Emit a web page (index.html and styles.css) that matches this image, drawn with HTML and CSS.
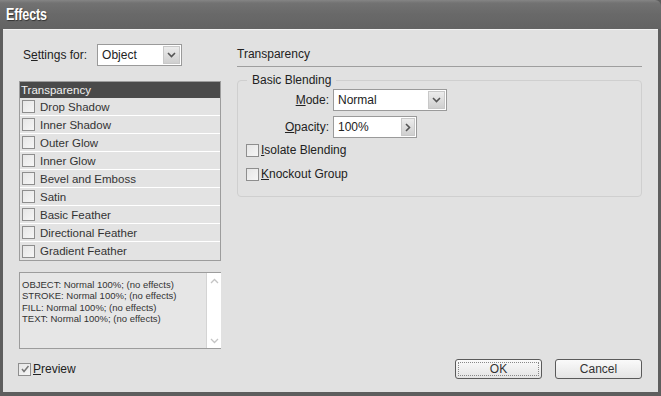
FILE: index.html
```html
<!DOCTYPE html>
<html lang="en">
<head>
    <meta charset="UTF-8">
    <title>Effects</title>
    <link rel="stylesheet" href="styles.css">
</head>
<body>
    <div class="window">
        <div class="titlebar">
            <span class="title">Effects</span>
        </div>

        <div class="content">
            <!-- left column: settings, effect list, summary -->
            <div class="left-col">
                <div class="settings-row">
                    <span class="label">S<u>e</u>ttings for:</span>
                    <div class="select settings-select">
                        <span class="select-value">Object</span>
                        <span class="drop-btn">
                            <svg width="9" height="6" viewBox="0 0 9 6"><path d="M1 1 L4.5 4.5 L8 1" fill="none" stroke="#555" stroke-width="1.6"/></svg>
                        </span>
                    </div>
                </div>

                <div class="effect-list">
                    <div class="effect-row selected">Transparency</div>
                    <div class="effect-row"><span class="check"></span>Drop Shadow</div>
                    <div class="effect-row"><span class="check"></span>Inner Shadow</div>
                    <div class="effect-row"><span class="check"></span>Outer Glow</div>
                    <div class="effect-row"><span class="check"></span>Inner Glow</div>
                    <div class="effect-row"><span class="check"></span>Bevel and Emboss</div>
                    <div class="effect-row"><span class="check"></span>Satin</div>
                    <div class="effect-row"><span class="check"></span>Basic Feather</div>
                    <div class="effect-row"><span class="check"></span>Directional Feather</div>
                    <div class="effect-row"><span class="check"></span>Gradient Feather</div>
                </div>

                <div class="summary">
                    <div class="summary-text">
                        OBJECT: Normal 100%; (no effects)<br>
                        STROKE: Normal 100%; (no effects)<br>
                        FILL: Normal 100%; (no effects)<br>
                        TEXT: Normal 100%; (no effects)
                    </div>
                    <div class="scrollbar">
                        <svg width="9" height="6" viewBox="0 0 9 6"><path d="M1 5 L4.5 1.5 L8 5" fill="none" stroke="#c4c4c4" stroke-width="1.3"/></svg>
                        <svg width="9" height="6" viewBox="0 0 9 6"><path d="M1 1 L4.5 4.5 L8 1" fill="none" stroke="#c4c4c4" stroke-width="1.3"/></svg>
                    </div>
                </div>

                <div class="preview-row">
                    <span class="check checked">
                        <svg width="10" height="10" viewBox="0 0 10 10"><path d="M2 5 L4 7.5 L8.5 2" fill="none" stroke="#777" stroke-width="1.5"/></svg>
                    </span>
                    <span><u>P</u>review</span>
                </div>
            </div>

            <!-- right column: transparency options and buttons -->
            <div class="right-col">
                <div class="section-title">Transparency</div>

                <div class="group">
                    <span class="legend">Basic Blending</span>

                    <div class="field-row">
                        <span class="field-label"><u>M</u>ode:</span>
                        <div class="select mode-select">
                            <span class="select-value">Normal</span>
                            <span class="drop-btn">
                                <svg width="9" height="6" viewBox="0 0 9 6"><path d="M1 1 L4.5 4.5 L8 1" fill="none" stroke="#555" stroke-width="1.6"/></svg>
                            </span>
                        </div>
                    </div>

                    <div class="field-row">
                        <span class="field-label"><u>O</u>pacity:</span>
                        <div class="select opacity-input">
                            <span class="select-value">100%</span>
                            <span class="drop-btn">
                                <svg width="6" height="9" viewBox="0 0 6 9"><path d="M1 1 L4.5 4.5 L1 8" fill="none" stroke="#555" stroke-width="1.6"/></svg>
                            </span>
                        </div>
                    </div>

                    <div class="check-row"><span class="check"></span><span><u>I</u>solate Blending</span></div>
                    <div class="check-row"><span class="check"></span><span><u>K</u>nockout Group</span></div>
                </div>

                <div class="buttons">
                    <button class="btn default">OK</button>
                    <button class="btn">Cancel</button>
                </div>
            </div>
        </div>
    </div>
</body>
</html>
```

FILE: styles.css
```css
* {
    margin: 0;
    padding: 0;
    box-sizing: border-box;
}

body {
    background-color: #5c5c5c;
    font-family: 'Liberation Sans', Arial, sans-serif;
    font-size: 11px;
    color: #222;
}

u {
    text-decoration: underline;
    text-underline-offset: 1px;
}

.window {
    width: 661px;
    height: 396px;
    display: flex;
    flex-direction: column;
    background-color: #5e5e5e;
    border-top-right-radius: 6px;
    overflow: hidden;
}

.titlebar {
    height: 29px;
    flex-shrink: 0;
    background: linear-gradient(#858585 0px, #727272 3px, #696969 14px, #636363 29px);
    display: flex;
    align-items: center;
    padding-left: 6px;
}

.title {
    color: #fff;
    font-size: 17px;
    font-weight: bold;
    letter-spacing: -0.2px;
    transform: scaleX(0.74);
    transform-origin: left center;
    text-shadow: 1px 1px 1px #333;
}

/* main light area inside the frame */
.content {
    flex: 1;
    margin: 0 3px 4px 3px;
    background-color: #e1e1e1;
    border-top: 1px solid #f2f2f2;
    display: flex;
    gap: 16px;
    padding: 14px 16px 0 16px;
}

.left-col {
    width: 202px;
    display: flex;
    flex-direction: column;
}

.settings-row {
    display: flex;
    align-items: center;
    gap: 10px;
    padding-left: 4px;
    font-size: 12px;
}

.label {
    color: #222;
}

.select {
    background-color: #fff;
    border: 1px solid #9a9a9a;
    display: flex;
    align-items: center;
    justify-content: space-between;
    padding: 1px;
}

.select-value {
    padding-left: 3px;
    font-size: 12px;
}

.drop-btn {
    width: 17px;
    height: 18px;
    background: linear-gradient(#ececec, #cfcfcf);
    border: 1px solid #c8c8c8;
    display: flex;
    align-items: center;
    justify-content: center;
}

.settings-select {
    width: 85px;
    height: 22px;
}

/* effect list */
.effect-list {
    margin-top: 15px;
    border: 1px solid #9c9c9c;
    background-color: #fff;
}

.effect-row {
    height: 18px;
    display: flex;
    align-items: center;
    gap: 5px;
    padding-left: 2px;
    background-color: #e3e3e3;
    border-bottom: 1px solid #fff;
    font-size: 11.5px;
    color: #333;
}

.effect-row:last-child {
    border-bottom: none;
}

.effect-row.selected {
    background-color: #4a4a4a;
    color: #f2f2f2;
    padding-left: 1px;
    height: 16px;
    border-bottom: none;
}

.check {
    width: 13px;
    height: 13px;
    border: 1px solid #8e8e8e;
    background: linear-gradient(135deg, #e6e6e6, #f6f6f6);
    display: inline-flex;
    align-items: center;
    justify-content: center;
    flex-shrink: 0;
}

/* summary box */
.summary {
    margin-top: 11px;
    height: 77px;
    display: flex;
    background-color: #e6e6e6;
    border: 1px solid #9c9c9c;
    border-right: none;
}

.summary-text {
    flex: 1;
    padding: 6px 2px;
    font-size: 9.5px;
    line-height: 11.4px;
    color: #333;
}

.scrollbar {
    width: 15px;
    background-color: #fff;
    border-left: 1px solid #d4d4d4;
    display: flex;
    flex-direction: column;
    justify-content: space-between;
    align-items: center;
    padding: 5px 0 4px 0;
}

.preview-row {
    margin-top: 13px;
    margin-left: -1px;
    display: flex;
    align-items: center;
    gap: 2px;
    font-size: 12px;
}

/* right column */
.right-col {
    flex: 1;
    display: flex;
    flex-direction: column;
}

.section-title {
    font-size: 12px;
    padding-top: 3px;
    padding-bottom: 5px;
    border-bottom: 1px solid #9e9e9e;
}

.group {
    position: relative;
    margin-top: 13px;
    height: 117px;
    border: 1px solid #cfcfcf;
    border-radius: 4px;
    padding: 8px 0 0 8px;
}

.legend {
    position: absolute;
    top: -8px;
    left: 9px;
    padding: 0 5px;
    background-color: #e1e1e1;
    font-size: 12px;
}

.field-row {
    display: flex;
    align-items: center;
    gap: 4px;
    margin-bottom: 5px;
    font-size: 12px;
}

.field-label {
    width: 83px;
    text-align: right;
}

.mode-select {
    width: 114px;
    height: 22px;
}

.opacity-input {
    width: 84px;
    height: 22px;
}

.opacity-input .drop-btn {
    width: 14px;
}

.check-row {
    display: flex;
    align-items: center;
    gap: 2px;
    margin-top: 5px;
    height: 14px;
    font-size: 12px;
}

.check-row + .check-row {
    margin-top: 10px;
}

.buttons {
    margin-top: auto;
    margin-bottom: 13px;
    display: flex;
    justify-content: flex-end;
    gap: 13px;
}

.btn {
    width: 87px;
    height: 20px;
    background: linear-gradient(#fafafa, #e4e4e4);
    border: 1px solid #5a5a5a;
    border-radius: 3px;
    font-family: 'Liberation Sans', Arial, sans-serif;
    font-size: 12px;
    color: #333;
}

.btn.default {
    outline: 1px dotted #888;
    outline-offset: -4px;
}
```
